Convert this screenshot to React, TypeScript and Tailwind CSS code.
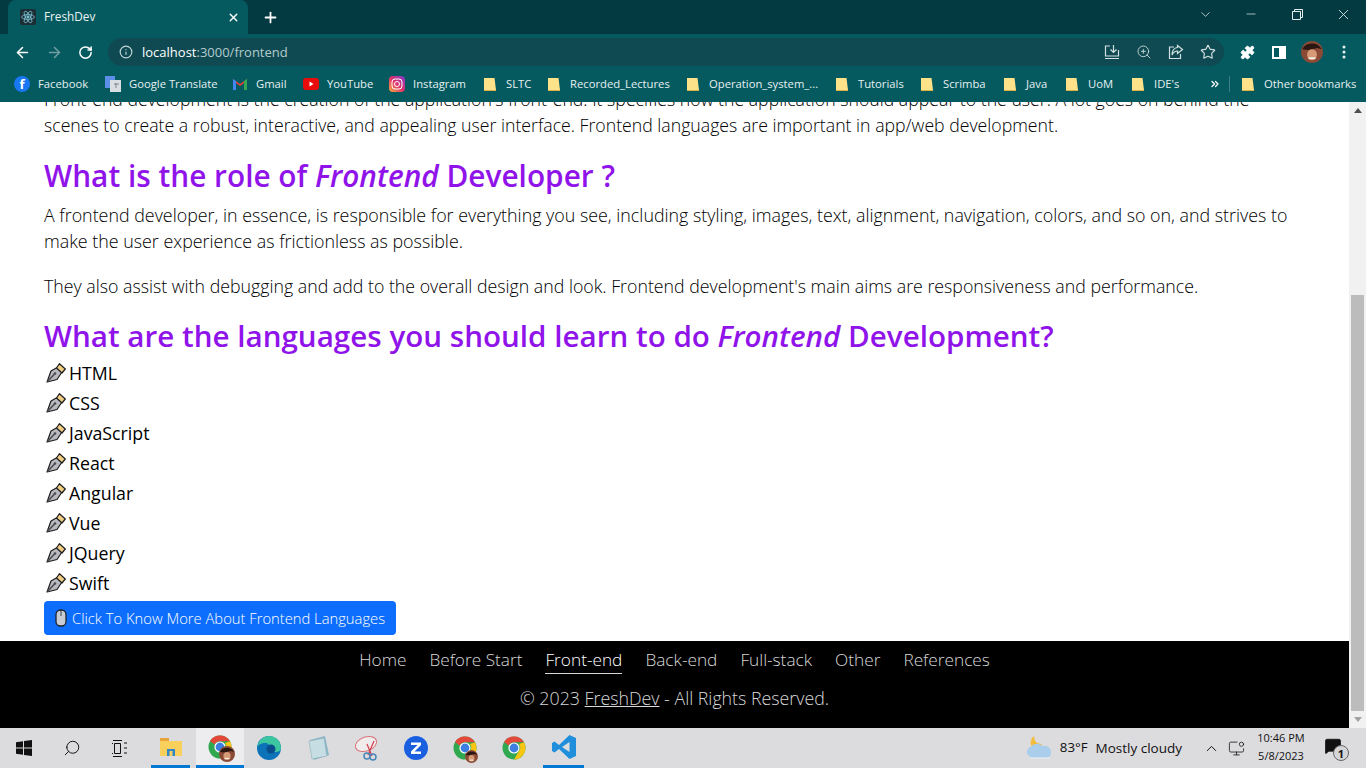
import React from "react";
import { ArrowLeft, ArrowRight, RotateCw, Info, Search, ZoomIn, Star, Plus, X, ChevronDown, Minus, Puzzle, ChevronUp, MonitorDot, MessageSquare, ChevronsRight } from "lucide-react";

const Folder = () => (
  <svg width="12" height="14" viewBox="0 0 12 14" className="shrink-0">
    <path d="M0 1h10.5L12 13H0z" fill="#fde28a" />
    <path d="M0 13h12v1H0z" fill="#d9b24a" />
  </svg>
);

const Pen = () => (
  <svg width="20" height="20" viewBox="0 0 20 20" className="shrink-0">
    <path d="M1 19 L5 8 L12 4 L16 9 L11 16.500 Z" fill="#b9b9c0" stroke="#1c1c1c" strokeWidth="1.200" strokeLinejoin="round" />
    <path d="M10.500 5 L13.500 .7 L19.300 6 L16 10 Z" fill="#f0cd85" stroke="#1c1c1c" strokeWidth="1.200" strokeLinejoin="round" />
    <path d="M1.500 18.500 L8.500 11" stroke="#4a4a50" strokeWidth="1.600" />
    <circle cx="9" cy="10.500" r="1.300" fill="#4a4a50" />
  </svg>
);

const Mouse = () => (
  <svg width="12" height="18" viewBox="0 0 12 18" className="shrink-0">
    <rect x="1" y="1" width="10" height="16" rx="4.500" fill="#c8ccd4" stroke="#20242c" strokeWidth="1.300" />
    <path d="M6 1v6" stroke="#20242c" strokeWidth="0.800" />
  </svg>
);

const ChromeLogo = ({ size = 24 }: { size?: number }) => (
  <svg width={size} height={size} viewBox="0 0 24 24">
    <circle cx="12" cy="12" r="11.500" fill="#2fa84f" />
    <path d="M12 .5A11.500 11.500 0 0 1 22 6.300H12A5.800 5.800 0 0 0 6.700 9.600L2 6A11.500 11.500 0 0 1 12 .5z" fill="#e3483a" />
    <path d="M22 6.300A11.500 11.500 0 0 1 12 23.500l5-8.500A5.800 5.800 0 0 0 17 8z" fill="#f9c513" />
    <circle cx="12" cy="12" r="5.600" fill="#fff" />
    <circle cx="12" cy="12" r="4.400" fill="#3d7fe0" />
  </svg>
);

const Face = ({ className = "" }: { className?: string }) => (
  <svg width="16" height="16" viewBox="0 0 16 16" className={className}>
    <circle cx="8" cy="8" r="8" fill="#8a4a35" />
    <path d="M1 6C3 1 12 0 15 6L12 5 5 6.500z" fill="#2b1712" />
    <ellipse cx="8" cy="10" rx="3.600" ry="4" fill="#d69a76" />
    <path d="M5.500 12.500h5" stroke="#f3eee5" strokeWidth="1.300" />
  </svg>
);

const bookmarks: { label: string; w: string }[] = [
  { label: "SLTC", w: "w-[24px]" },
  { label: "Recorded_Lectures", w: "w-[99px]" },
  { label: "Operation_system_...", w: "w-[109px]" },
  { label: "Tutorials", w: "w-[45px]" },
  { label: "Scrimba", w: "w-[43px]" },
  { label: "Java", w: "w-[22px]" },
  { label: "UoM", w: "w-[26px]" },
  { label: "IDE's", w: "w-[25px]" },
];

const BookmarkText = ({ children, w = "" }: { children: React.ReactNode; w?: string }) => (
  <span className={`${w} block whitespace-nowrap text-[11.250px] leading-none text-[#e6f0f0]`}>{children}</span>
);

const Browser = () => (
  <header className="relative z-10 shrink-0 font-['Open_Sans',sans-serif]">
    <div className="flex h-[34px] items-end bg-[#033a42] pl-[8px]">
      <div className="flex h-[34px] w-[240px] items-center rounded-t-[8px] bg-[#055a60] pl-[12px] pr-[8px] text-white">
        <span className="flex h-[16px] w-[16px] items-center justify-center rounded-[2px] bg-[#1c2f36]">
          <svg width="14" height="14" viewBox="-12 -12 24 24" fill="none" stroke="#7fc6d8" strokeWidth="1.300">
            <ellipse rx="11" ry="4.200" />
            <ellipse rx="11" ry="4.200" transform="rotate(60)" />
            <ellipse rx="11" ry="4.200" transform="rotate(120)" />
            <circle r="2" fill="#7fc6d8" />
          </svg>
        </span>
        <span className="ml-[8px] text-[11.750px] text-[#eaf3f3]">FreshDev</span>
        <X className="ml-auto text-white" size={13} strokeWidth={2.500} />
      </div>
      <div className="flex h-[34px] w-[44px] items-center justify-center text-white">
        <Plus size={17} strokeWidth={2.500} />
      </div>
      <div className="ml-auto flex h-[34px] items-start text-[#e4eeee]">
        <div className="flex h-[28px] w-[46px] items-center justify-center"><ChevronDown size={15} strokeWidth={1.200} /></div>
        <div className="flex h-[28px] w-[46px] items-center justify-center"><Minus size={14} strokeWidth={1.200} /></div>
        <div className="flex h-[28px] w-[46px] items-center justify-center">
          <svg width="11" height="11" viewBox="0 0 11 11" fill="none" stroke="#e4eeee"><path d="M.5 2.500h8v8h-8zM2.500 2.500v-2h8v8h-2" /></svg>
        </div>
        <div className="flex h-[28px] w-[46px] items-center justify-center"><X size={17} strokeWidth={1.200} /></div>
      </div>
    </div>
    <div className="flex h-[36px] items-center bg-[#055a60] text-white">
      <ArrowLeft className="ml-[14px]" size={17} strokeWidth={2.200} />
      <ArrowRight className="ml-[15px] text-[#6f9da0]" size={17} strokeWidth={2.200} />
      <RotateCw className="ml-[15px]" size={15} strokeWidth={2.400} />
      <div className="ml-[15px] flex h-[28px] w-[1116px] items-center rounded-full bg-[#0f4a52] pl-[11px] pr-[8px]">
        <Info className="text-[#c1d6d7]" size={14} strokeWidth={2} />
        <span className="ml-[9px] translate-y-[1px] text-[13px] text-white">localhost<span className="text-[#b3cbcd]">:3000/frontend</span></span>
        <div className="ml-auto flex items-center gap-[16px] text-[#d3e0e1]">
          <svg width="16" height="16" viewBox="0 0 16 16" fill="none" stroke="currentColor" strokeWidth="1.200">
            <path d="M6 2H1.500v10h13V6M9.500 1v7M6.500 5.500l3 3 3-3M1 14.500h14" />
          </svg>
          <ZoomIn size={16} strokeWidth={1.300} />
          <svg width="16" height="16" viewBox="0 0 16 16" fill="none" stroke="currentColor" strokeWidth="1.200">
            <path d="M6 3H1.500v11.500h11V10M9.500 1.500l5 4-5 4V7C6.500 7 5 9 4 11c0-4 2-7.500 5.500-7.500z" />
          </svg>
          <Star size={16} strokeWidth={1.700} />
        </div>
      </div>
      <Puzzle className="ml-[16px]" size={15} fill="white" strokeWidth={1.500} />
      <span className="ml-[17px] h-[13px] w-[14px] border-[2px] border-white bg-[linear-gradient(90deg,#055a60_50%,#fff_50%)]" />
      <Face className="ml-[15px] h-[22px] w-[22px]" />
      <svg width="4" height="14" viewBox="0 0 4 14" className="ml-[19px]" fill="#e6f0f0"><circle cx="2" cy="2" r="1.500" /><circle cx="2" cy="7" r="1.500" /><circle cx="2" cy="12" r="1.500" /></svg>
    </div>
    <div className="flex h-[32px] items-center bg-[#055a60] pb-[4px] pl-[14px]">
      <span className="flex h-[16px] w-[16px] items-center justify-center rounded-full bg-[#1877f2] text-[13px] font-bold leading-none text-white">f</span>
      <span className="ml-[8px] mr-[17px] w-[50px]"><BookmarkText>Facebook</BookmarkText></span>
      <svg width="16" height="16" viewBox="0 0 16 16"><rect width="10" height="12" fill="#5b8fe8" /><rect x="5" y="4" width="11" height="12" fill="#d9dee3" /><path d="M9 8h5M11 7v5" stroke="#7b8490" strokeWidth="1" /></svg>
      <span className="ml-[8px] mr-[17px] w-[87px]"><BookmarkText>Google Translate</BookmarkText></span>
      <svg width="14" height="12" viewBox="0 0 14 12"><path d="M0 1l7 5 7-5v11h-3V5L7 8 3 5v7H0z" fill="#ea4335" /><path d="M0 12V1l3 2v9z" fill="#4285f4" /><path d="M11 12V3l3-2v11z" fill="#34a853" /></svg>
      <span className="ml-[9px] mr-[16px] w-[31px]"><BookmarkText>Gmail</BookmarkText></span>
      <svg width="16" height="12" viewBox="0 0 16 12"><rect width="16" height="12" rx="3" fill="#e80c0c" /><path d="M6.500 3.500v5l4-2.500z" fill="#fff" /></svg>
      <span className="ml-[8px] mr-[16px] w-[46px]"><BookmarkText>YouTube</BookmarkText></span>
      <svg width="16" height="16" viewBox="0 0 16 16" fill="none"><defs><linearGradient id="ig" x1="0" y1="1" x2="1" y2="0"><stop stopColor="#f9b13c" /><stop offset="0.500" stopColor="#e1306c" /><stop offset="1" stopColor="#7a3bd0" /></linearGradient></defs><rect width="16" height="16" rx="4" fill="url(#ig)" /><rect x="3" y="3" width="10" height="10" rx="3" stroke="#fff" /><circle cx="8" cy="8" r="2.500" stroke="#fff" /></svg>
      <span className="ml-[8px] mr-[18px] w-[53px]"><BookmarkText>Instagram</BookmarkText></span>
      <div className="flex items-center gap-[18px]">
        {bookmarks.map((b) => (
          <div key={b.label} className="flex items-center gap-[10px]">
            <Folder />
            <BookmarkText w={b.w}>{b.label}</BookmarkText>
          </div>
        ))}
      </div>
      <ChevronsRight className="ml-[30px] text-white" size={12} strokeWidth={2.500} />
      <span className="ml-[8px] h-[16px] w-px bg-[#3f8085]" />
      <span className="ml-[12px]"><Folder /></span>
      <span className="ml-[10px]"><BookmarkText>Other bookmarks</BookmarkText></span>
    </div>
  </header>
);

const Em = ({ children }: { children: React.ReactNode }) => <em className="italic">{children}</em>;

const langs = ["HTML", "CSS", "JavaScript", "React", "Angular", "Vue", "JQuery", "Swift"];
const nav = ["Home", "Before Start", "Front-end", "Back-end", "Full-stack", "Other", "References"];

const Page = () => (
  <div className="flex min-h-0 flex-1">
    <main className="flex min-w-0 flex-1 flex-col justify-between overflow-hidden bg-white font-['Open_Sans',sans-serif]">
      <div className="mt-[-16px] px-[44px] text-black">
        <p className="text-[17.700px] font-light leading-[26px]">
          Front-end development is the creation of the application's front-end. It specifies how the application should appear to the user. A lot goes on behind the scenes to create a robust, interactive, and appealing user interface. Frontend languages are important in app/web development.
        </p>
        <h2 className="mt-[19px] text-[29.800px] font-semibold leading-[38px] text-[#9013ea]">
          What is the role of <Em>Frontend</Em> Developer ?
        </h2>
        <p className="mt-[7px] text-[17.850px] font-light leading-[26px]">
          A frontend developer, in essence, is responsible for everything you see, including styling, images, text, alignment, navigation, colors, and so on, and strives to make the user experience as frictionless as possible.
        </p>
        <p className="mt-[19px] text-[17.750px] font-light leading-[26px]">
          They also assist with debugging and add to the overall design and look. Frontend development's main aims are responsiveness and performance.
        </p>
        <h2 className="mt-[18px] text-[29.600px] font-semibold leading-[38px] text-[#9013ea]">
          What are the languages you should learn to do <Em>Frontend</Em> Development?
        </h2>
        <ul className="mt-[3px]">
          {langs.map((l) => (
            <li key={l} className="flex h-[30px] items-center gap-[3px] pl-[2px] text-[17.750px] font-medium">
              <Pen />
              {l}
            </li>
          ))}
        </ul>
        <button className="mt-[3px] flex h-[34px] w-[352px] items-center gap-[5px] whitespace-nowrap rounded-[4px] bg-[#0d6efd] pl-[11px] text-[14.750px] font-light text-white">
          <Mouse />
          Click To Know More About Frontend Languages
        </button>
      </div>
      <footer className="flex h-[87px] shrink-0 flex-col items-center bg-black font-light text-[#d8d8d8]">
        <nav className="mt-[6px] flex gap-[23px] text-[17.250px] leading-[26px]">
          {nav.map((n) => (
            <span key={n} className={n === "Front-end" ? "border-b border-[#d8d8d8] text-white" : ""}>{n}</span>
          ))}
        </nav>
        <p className="mt-[11px] text-[17.800px] leading-[26px]">© 2023 <span className="underline">FreshDev</span> - All Rights Reserved.</p>
      </footer>
    </main>
    <aside className="flex w-[17px] shrink-0 flex-col bg-[#f1f1f1]">
      <div className="flex h-[17px] items-center justify-center"><span className="border-x-[4px] border-b-[5px] border-x-transparent border-b-[#505050]" /></div>
      <div className="mx-[2px] mt-[176px] flex-1 bg-[#bcbcbc]" />
      <div className="flex h-[17px] items-center justify-center"><span className="border-x-[4px] border-t-[5px] border-x-transparent border-t-[#a3a3a3]" /></div>
    </aside>
  </div>
);

const Taskbar = () => (
  <div className="flex h-[40px] shrink-0 items-center bg-[#dcdcdf] font-['Open_Sans',sans-serif] text-[#111]">
    <div className="flex w-[48px] justify-center">
      <svg width="16" height="16" viewBox="0 0 16 16" fill="#111"><path d="M0 2.200l7-1v6.300H0zM8 1l8-1v7.500H8zM0 8.500h7v6.300l-7-1zM8 8.500h8V16l-8-1z" /></svg>
    </div>
    <div className="flex w-[48px] justify-center"><Search size={18} strokeWidth={1.300} className="-scale-x-100" /></div>
    <div className="flex w-[48px] justify-center">
      <svg width="16" height="17" viewBox="0 0 16 17" fill="none" stroke="#111"><path d="M1 .5h9M1 16.500h9M2.500 3.500h6v10h-6zM12 3h3M12 8h3M12 13h3M0 3.500h1M0 13.500h1" /></svg>
    </div>
    <div className="ml-[7px] flex h-[40px] w-[39px] items-center justify-center border-b-[3px] border-[#0078d4]">
      <svg width="22" height="18" viewBox="0 0 22 18"><path d="M0 0h9v3H0z" fill="#e8a33a" /><path d="M0 3h22v15H0z" fill="#f9d05c" /><path d="M7 11h8v7H7z" fill="#2f86c9" /><path d="M9.500 13h3v5h-3z" fill="#f9d05c" /></svg>
    </div>
    <div className="ml-[6px] flex h-[40px] w-[48px] items-center justify-center border-b-[3px] border-[#0078d4] bg-[#ededef]">
      <div className="relative"><ChromeLogo /><Face className="absolute -bottom-[3px] -right-[3px]" /></div>
    </div>
    <div className="ml-[1px] flex w-[48px] justify-center">
      <svg width="24" height="24" viewBox="0 0 24 24"><circle cx="12" cy="12" r="12" fill="#0c73b8" /><path d="M0 11C2 3 8 0 12 0c7 0 12 5 12 12 0 3-3 4-6 4-4 0-5-2-5-4 0-3-2-5-5-5-4 0-7 2-8 4z" fill="#3cc6a0" /><circle cx="14" cy="13" r="4.500" fill="#0a4d8c" /></svg>
    </div>
    <div className="ml-[1px] flex w-[48px] justify-center">
      <svg width="22" height="24" viewBox="0 0 22 24"><path d="M3 4l15-4 4 19-15 5z" fill="#8ab7c6" /><path d="M2 5l15-3 3 18-15 3z" fill="#c5dde3" stroke="#7fa4ae" strokeWidth="0.500" /></svg>
    </div>
    <div className="ml-[1px] flex w-[48px] justify-center">
      <svg width="26" height="26" viewBox="0 0 26 26" fill="none"><ellipse cx="12" cy="9" rx="11" ry="7" fill="#f1ecec" stroke="#d9747c" transform="rotate(-20 12 9)" /><path d="M13 9l5 12M20 6l-6 14" stroke="#d33b4a" strokeWidth="1.200" /><circle cx="13" cy="21" r="3" stroke="#4a86b8" strokeWidth="1.500" /><circle cx="19" cy="22" r="3" stroke="#4a86b8" strokeWidth="1.500" /></svg>
    </div>
    <div className="ml-[1px] flex w-[48px] justify-center">
      <svg width="24" height="24" viewBox="0 0 24 24"><circle cx="12" cy="12" r="12" fill="#1a5fe0" /><path d="M7 6.500h10v2.500l-6.500 6.500H17V18H7v-2.500L13.500 9H7z" fill="#fff" /></svg>
    </div>
    <div className="ml-[1px] flex w-[48px] justify-center">
      <div className="relative"><ChromeLogo /><Face className="absolute -bottom-[3px] -right-[1px] h-[13px] w-[13px]" /></div>
    </div>
    <div className="ml-[1px] flex w-[48px] justify-center"><ChromeLogo /></div>
    <div className="ml-[5px] flex h-[40px] w-[41px] items-center justify-center border-b-[3px] border-[#0078d4]">
      <svg width="24" height="24" viewBox="0 0 24 24"><path d="M17.500 0L24 3v18l-6.500 3L7 14l-4.500 3.500L0 16V8l2.500-1.500L7 10z" fill="#1f8fdc" /><path d="M17.500 7L10 12l7.500 5z" fill="#dcdcdf" /></svg>
    </div>
    <div className="ml-auto flex items-center">
      <svg width="28" height="26" viewBox="0 0 28 26"><path d="M8 1c0 5 3 8 8 8-1 3-5 5-8 4C4 12 3 5 8 1z" fill="#f2bc3d" /><path d="M3 21a5 5 0 0 1 2-9c2-4 9-4 11-1 5-1 9 2 9 6s-2 6-5 6H6z" fill="#a9cdea" /><path d="M4 23h20" stroke="#e8f1f8" /></svg>
      <span className="ml-[6px] text-[13.250px]">83°F</span>
      <span className="ml-[8px] text-[13.500px]">Mostly cloudy</span>
      <ChevronUp className="ml-[21px]" size={17} strokeWidth={1.400} />
      <MonitorDot className="ml-[8px]" size={17} strokeWidth={1.100} />
      <div className="ml-[9px] flex w-[54px] -translate-y-[1px] flex-col items-center text-[11px] leading-[18px]">
        <span>10:46 PM</span>
        <span>5/8/2023</span>
      </div>
      <div className="relative ml-[16px] mr-[24px] h-[22px] w-[18px]">
        <MessageSquare size={18} fill="#111" strokeWidth={1} />
        <span className="absolute -bottom-[2px] -right-[7px] flex h-[16px] w-[16px] items-center justify-center rounded-full border border-[#666] bg-[#d5d5d8] text-[11px] font-bold leading-none">1</span>
      </div>
    </div>
  </div>
);

export default function App() {
  return (
    <div className="flex h-[768px] w-[1366px] flex-col overflow-hidden">
      <Browser />
      <Page />
      <Taskbar />
    </div>
  );
}
